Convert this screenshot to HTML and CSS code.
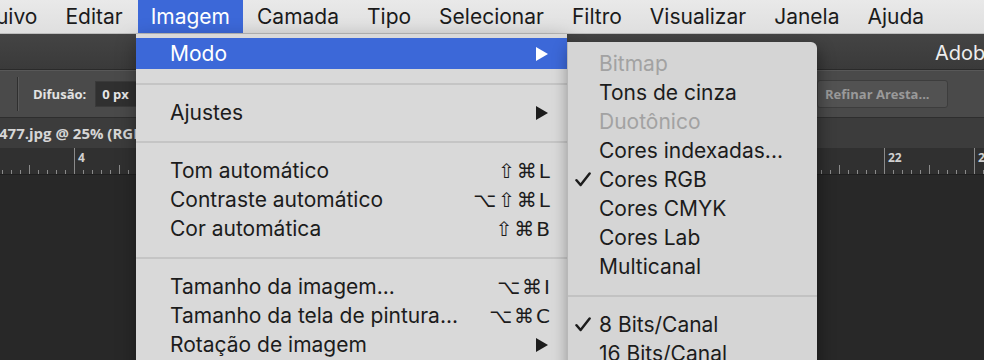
FILE: index.html
```html
<!DOCTYPE html>
<html lang="pt-BR">
<head>
<meta charset="utf-8">
<title>Photoshop - Imagem</title>
<link rel="stylesheet" href="styles.css">
</head>
<body>
<div class="screen">
  <nav class="menubar">
    <span class="mb-item first">Arquivo</span>
    <span class="mb-item">Editar</span>
    <span class="mb-item active">Imagem</span>
    <span class="mb-item">Camada</span>
    <span class="mb-item">Tipo</span>
    <span class="mb-item">Selecionar</span>
    <span class="mb-item">Filtro</span>
    <span class="mb-item">Visualizar</span>
    <span class="mb-item">Janela</span>
    <span class="mb-item">Ajuda</span>
  </nav>
  <div class="app">
    <div class="titlebar"><span class="apptitle">Adobe Photoshop CC 2017</span></div>
    <div class="options">
      <span class="opt-sep"></span>
      <span class="opt-label">Difusão:</span>
      <span class="opt-input">0 px</span>
      <span class="opt-button">Refinar Aresta...</span>
    </div>
    <div class="doctab"><span class="docname">477.jpg @ 25% (RGB/8)</span></div>
    <div class="ruler">
      <span class="seg">2</span><span class="seg">4</span><span class="seg">6</span><span class="seg">8</span><span class="seg">10</span><span class="seg">12</span><span class="seg">14</span><span class="seg">16</span><span class="seg">18</span><span class="seg">20</span><span class="seg">22</span><span class="seg">24</span>
    </div>
    <div class="canvas"></div>
  </div>

  <div class="menu">
    <div class="row hl"><span class="label">Modo</span><span class="arrow"></span></div>
    <div class="sep"></div>
    <div class="row"><span class="label">Ajustes</span><span class="arrow"></span></div>
    <div class="sep"></div>
    <div class="row"><span class="label">Tom automático</span><span class="kbd">⇧⌘L</span></div>
    <div class="row"><span class="label">Contraste automático</span><span class="kbd">⌥⇧⌘L</span></div>
    <div class="row"><span class="label">Cor automática</span><span class="kbd">⇧⌘B</span></div>
    <div class="sep"></div>
    <div class="row"><span class="label">Tamanho da imagem...</span><span class="kbd">⌥⌘I</span></div>
    <div class="row"><span class="label">Tamanho da tela de pintura...</span><span class="kbd">⌥⌘C</span></div>
    <div class="row"><span class="label">Rotação de imagem</span><span class="arrow"></span></div>
  </div>

  <div class="submenu">
    <div class="srow disabled"><span class="check"></span>Bitmap</div>
    <div class="srow"><span class="check"></span>Tons de cinza</div>
    <div class="srow disabled"><span class="check"></span>Duotônico</div>
    <div class="srow"><span class="check"></span>Cores indexadas...</div>
    <div class="srow"><span class="check"><svg viewBox="0 0 16 15" width="16" height="15"><path d="M1.5 8.2 L5.6 13 L14.6 1.6" fill="none" stroke="#1c1c1c" stroke-width="2.5" stroke-linecap="round" stroke-linejoin="round"/></svg></span>Cores RGB</div>
    <div class="srow"><span class="check"></span>Cores CMYK</div>
    <div class="srow"><span class="check"></span>Cores Lab</div>
    <div class="srow"><span class="check"></span>Multicanal</div>
    <div class="ssep"></div>
    <div class="srow"><span class="check"><svg viewBox="0 0 16 15" width="16" height="15"><path d="M1.5 8.2 L5.6 13 L14.6 1.6" fill="none" stroke="#1c1c1c" stroke-width="2.5" stroke-linecap="round" stroke-linejoin="round"/></svg></span>8 Bits/Canal</div>
    <div class="srow"><span class="check"></span>16 Bits/Canal</div>
  </div>
</div>
</body>
</html>
```

FILE: styles.css
```css
* { box-sizing: border-box; }
html, body { margin: 0; padding: 0; }
body {
  width: 984px;
  height: 360px;
  overflow: hidden;
  background: #282828;
  font-family: "Inter", "DejaVu Sans", sans-serif;
}
.screen {
  position: relative;
  width: 984px;
  height: 360px;
  overflow: hidden;
  display: flex;
  flex-direction: column;
}

/* mac menu bar */
.menubar {
  height: 34px;
  flex: none;
  display: flex;
  align-items: stretch;
  background: linear-gradient(#e9e9e9, #dfdfdf);
  border-bottom: 1px solid #bdbdbd;
  font-size: 21px;
  color: #1b1b1b;
  white-space: nowrap;
}
.mb-item {
  display: flex;
  align-items: center;
  padding: 0 14px;
}
.mb-item.first { margin-left: -53px; }
.mb-item.active {
  background: #3c68d8;
  color: #ffffff;
  padding: 0 13px;
  margin-left: 1px;
}

/* photoshop app */
.app {
  flex: 1;
  display: flex;
  flex-direction: column;
  background: #282828;
}
.titlebar {
  height: 36px;
  flex: none;
  background: linear-gradient(#444444, #3a3a3a);
  border-bottom: 1px solid #2a2a2a;
  display: flex;
  align-items: center;
  padding-left: 935px;
  white-space: nowrap;
}
.apptitle {
  color: #eeeeee;
  font-size: 20px;
  padding-top: 2px;
}
.options {
  height: 48px;
  flex: none;
  background: #4a4a4a;
  border-top: 1px solid #585858;
  border-bottom: 1px solid #2e2e2e;
  display: flex;
  align-items: center;
  padding-left: 17px;
  font-family: "Open Sans", "DejaVu Sans", sans-serif;
  white-space: nowrap;
}
.opt-sep {
  width: 1px;
  height: 34px;
  background: #2f2f2f;
  box-shadow: 1px 0 0 #5a5a5a;
  margin-right: 15px;
}
.opt-label {
  color: #e2e2e2;
  font-size: 13px;
  font-weight: 700;
  margin-right: 9px;
}
.opt-input {
  background: #303030;
  color: #e6e6e6;
  font-size: 13px;
  font-weight: 700;
  height: 26px;
  width: 60px;
  display: flex;
  align-items: center;
  padding-left: 6px;
  border: 1px solid #3a3a3a;
}
.opt-button {
  margin-left: auto;
  margin-right: 36px;
  width: 131px;
  height: 28px;
  border-radius: 3px;
  background: #525252;
  border: 1px solid #3d3d3d;
  color: #9a9a9a;
  font-size: 13px;
  font-weight: 700;
  display: flex;
  align-items: center;
  padding-left: 7px;
}
.doctab {
  height: 30px;
  flex: none;
  background: #3c3c3c;
  display: flex;
  align-items: center;
  font-family: "Open Sans", "DejaVu Sans", sans-serif;
  white-space: nowrap;
}
.docname {
  color: #d6d6d6;
  font-size: 15px;
  font-weight: 700;
  margin-left: -1px;
}
.ruler {
  height: 27px;
  flex: none;
  display: flex;
  margin-left: -16px;
  background-color: #303030;
  border-bottom: 1px solid #1f1f1f;
  white-space: nowrap;
}
.seg {
  flex: none;
  width: 90px;
  height: 100%;
  border-left: 1px solid #8a8a8a;
  color: #d0d0d0;
  font-family: "Open Sans", "DejaVu Sans", sans-serif;
  font-size: 12px;
  font-weight: 700;
  padding: 4px 0 0 3px;
  line-height: 1;
  background-image:
    linear-gradient(#8a8a8a, #8a8a8a),
    repeating-linear-gradient(90deg, transparent 0 8px, #8a8a8a 8px 9px);
  background-size: 1px 9px, 100% 4px;
  background-position: 44px 100%, 0 100%;
  background-repeat: no-repeat, no-repeat;
}
.canvas {
  flex: 1;
  background: #282828;
}

/* image menu */
.menu {
  position: absolute;
  left: 136px;
  top: 34px;
  width: 431px;
  height: 340px;
  background: #d9d9d9;
  padding-top: 4px;
  box-shadow: 0 6px 18px rgba(0,0,0,0.35);
  font-size: 21px;
  color: #1c1c1c;
  white-space: nowrap;
}
.row {
  height: 29px;
  display: flex;
  align-items: center;
  padding: 0 17px 0 34px;
}
.row.hl {
  height: 31px;
  background: #3c68d8;
  color: #ffffff;
}
.label { flex: 1; }
.arrow {
  width: 0;
  height: 0;
  border-top: 7px solid transparent;
  border-bottom: 7px solid transparent;
  border-left: 12px solid #1c1c1c;
  margin-right: 2px;
}
.row.hl .arrow { border-left-color: #ffffff; }
.kbd {
  font-family: "DejaVu Sans", sans-serif;
  font-size: 20px;
  letter-spacing: 2px;
  margin-right: -2px;
}
.sep {
  height: 29px;
  display: flex;
  align-items: center;
}
.sep::before {
  content: "";
  flex: 1;
  height: 2px;
  background: #c5c5c5;
}

/* modo submenu */
.submenu {
  position: absolute;
  left: 567px;
  top: 42px;
  width: 250px;
  height: 330px;
  background: #d5d5d5;
  border-radius: 0 6px 0 0;
  border-left: 1px solid #b8b8b8;
  padding-top: 7px;
  box-shadow: 2px 6px 16px rgba(0,0,0,0.4);
  font-size: 21px;
  color: #1c1c1c;
  white-space: nowrap;
}
.srow {
  height: 29px;
  display: flex;
  align-items: center;
  padding-left: 7px;
}
.srow.disabled { color: #a2a2a2; }
.check {
  width: 24px;
  height: 15px;
  display: flex;
  align-items: center;
}
.ssep {
  height: 29px;
  display: flex;
  align-items: center;
}
.ssep::before {
  content: "";
  flex: 1;
  height: 2px;
  background: #c2c2c2;
}
```
